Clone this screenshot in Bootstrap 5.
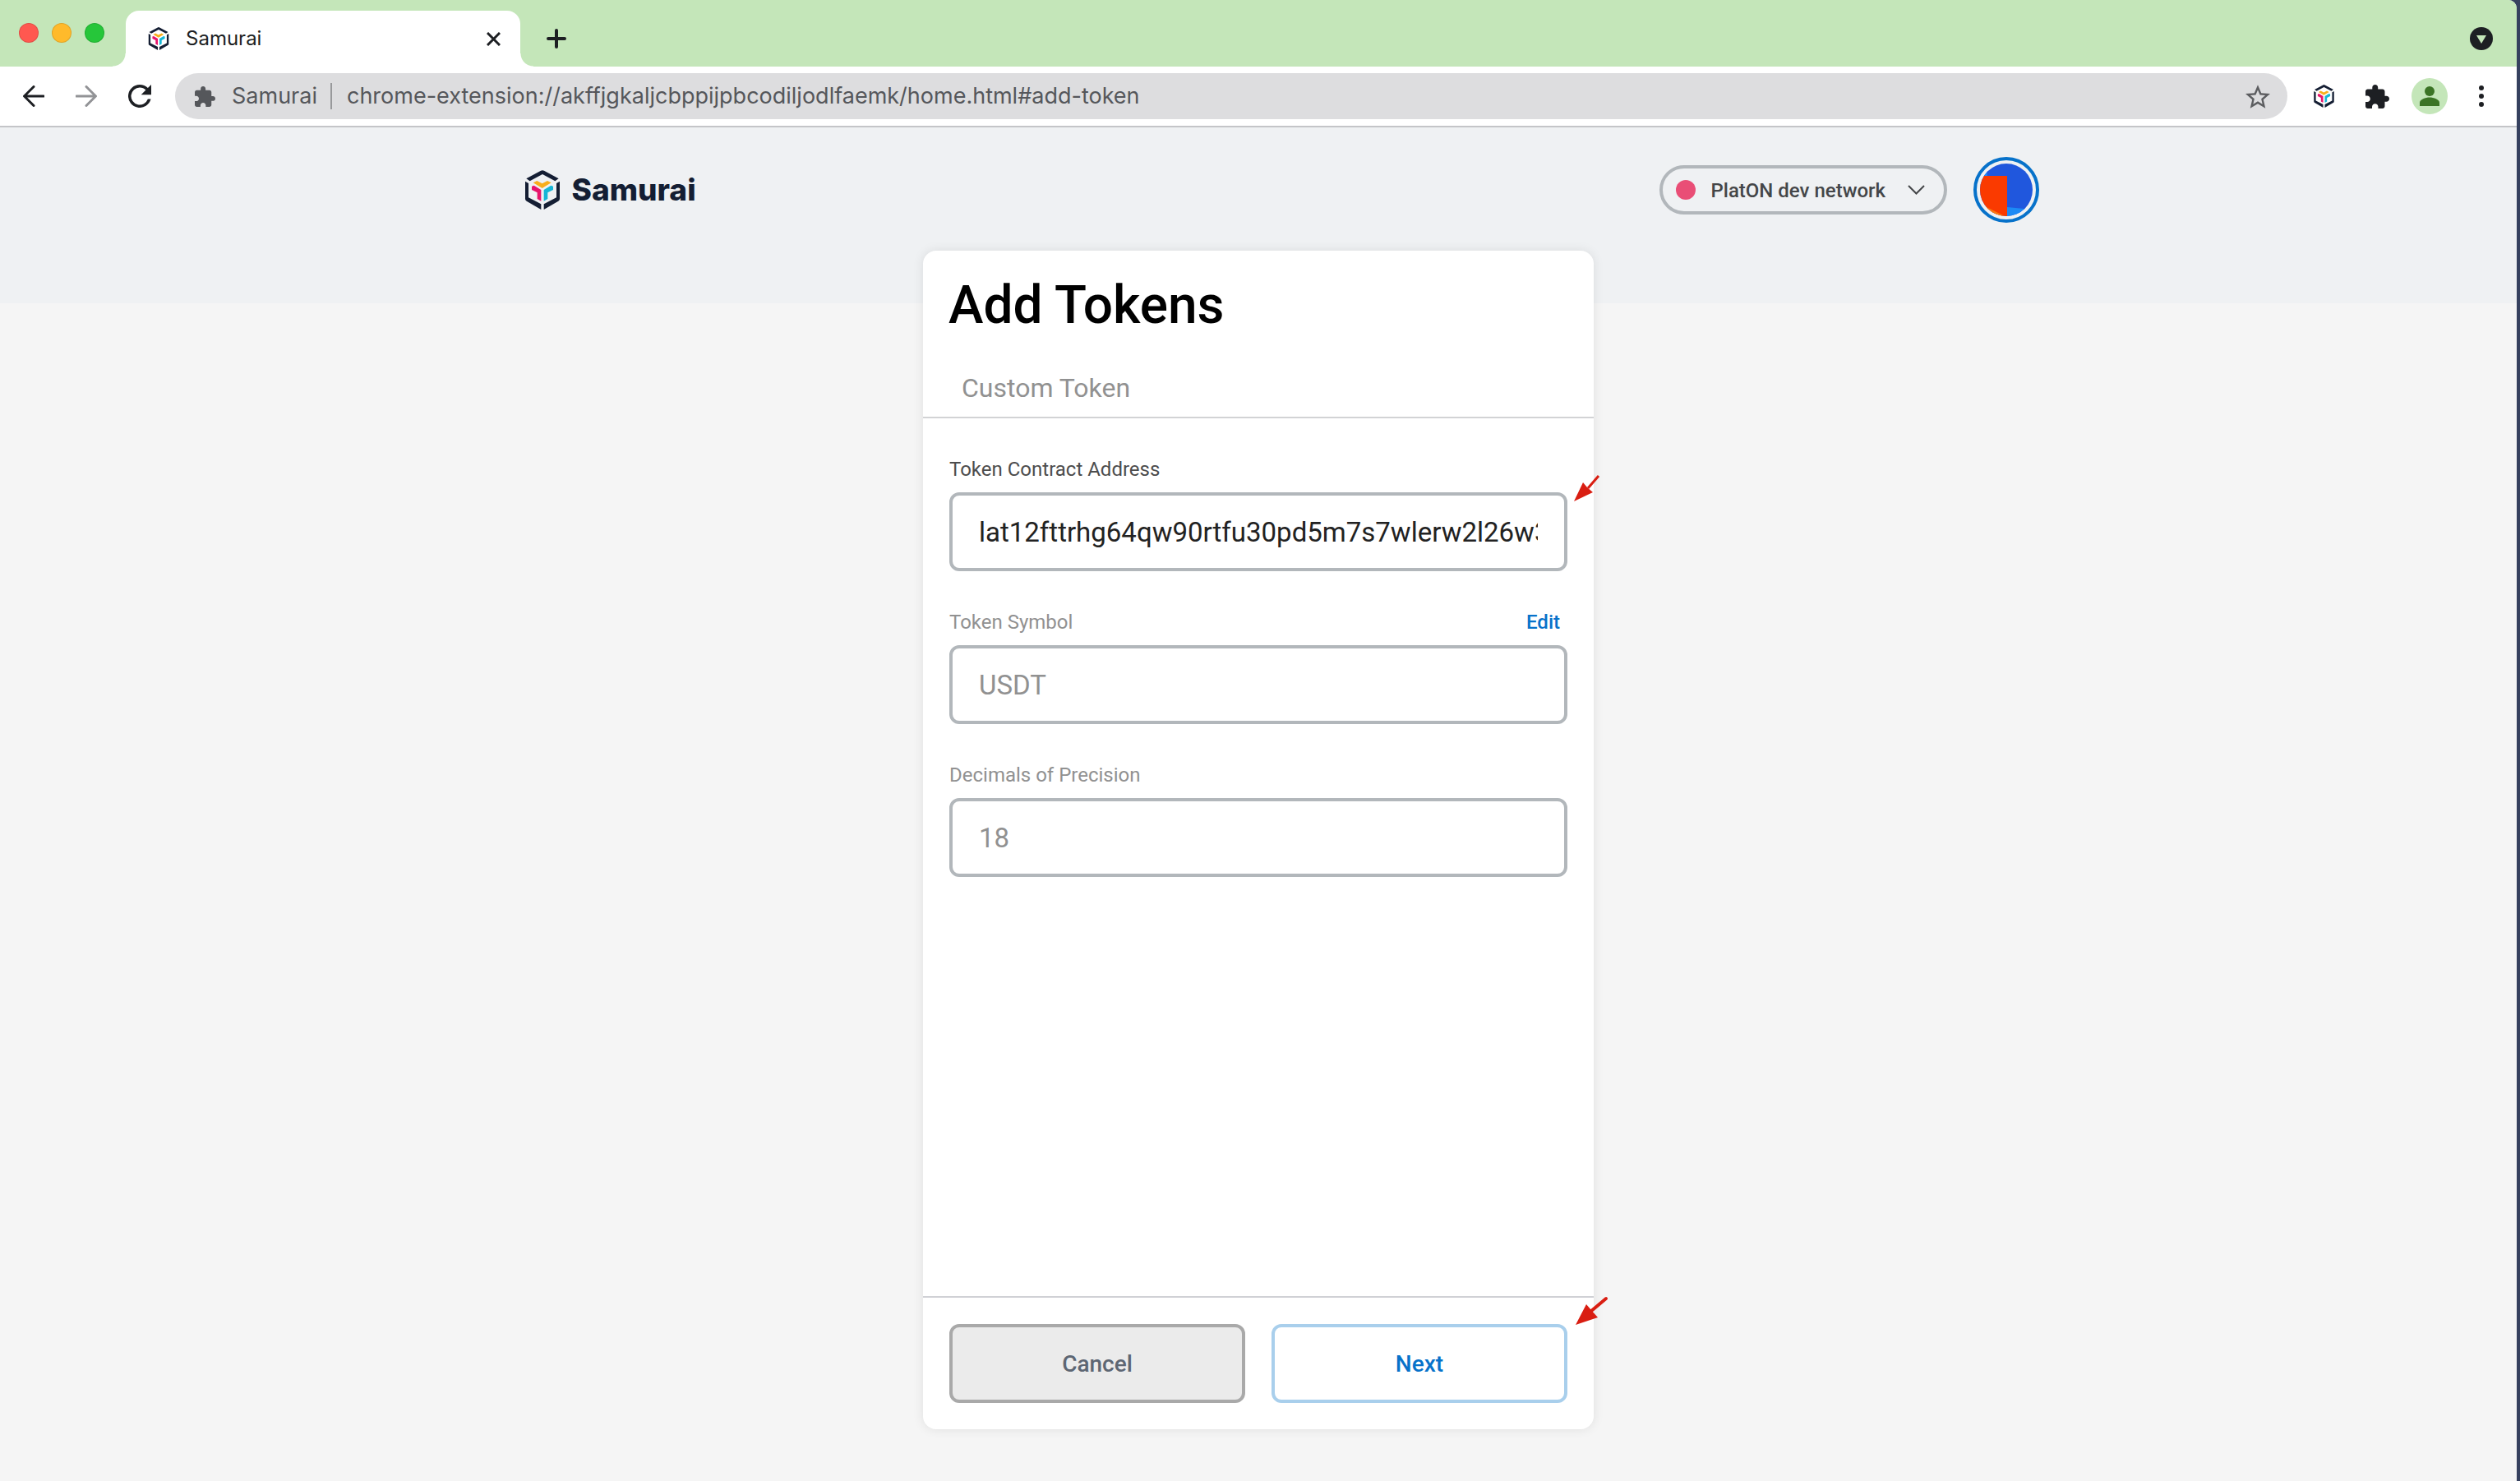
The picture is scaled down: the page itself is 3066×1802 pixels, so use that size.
<!DOCTYPE html>
<html lang="en">
<head>
<meta charset="utf-8">
<meta name="viewport" content="width=device-width, initial-scale=1">
<title>Samurai</title>
<link href="https://cdn.jsdelivr.net/npm/bootstrap@5.3.0/dist/css/bootstrap.min.css" rel="stylesheet">
<style>
  body { background: #36415f; font-family: Roboto, "Liberation Sans", sans-serif; font-size: 24px; line-height: 32px; }
  svg { display: block; flex: none; }
  button svg, a svg { pointer-events: none; }
  .window { min-height: 100vh; margin-right: 4px; background: #f5f5f5; border-top-right-radius: 10px; overflow: hidden; }
  .plain { border: 0; background: none; padding: 0; color: #1d1f23; }

  /* browser chrome */
  .chrome-text { font-family: Inter, "Liberation Sans", sans-serif; }
  .tab-strip { height: 81px; background: #c4e6b9; padding: 13px 29px 0 23px; }
  .lights { gap: 16px; height: 54px; }
  .light { width: 24px; height: 24px; border-radius: 50%; border: 1px solid rgba(0,0,0,.12); }
  .light-r { background: #ff5850; } .light-y { background: #ffba2b; } .light-g { background: #26c63a; }
  .page-tab { position: relative; width: 480px; height: 68px; margin-left: 26px; padding: 0 24px 0 27px; background: #fff; border-radius: 16px 16px 0 0; font-size: 24px; color: #1d1f23; }
  .page-tab::before, .page-tab::after { content: ""; position: absolute; bottom: 0; width: 16px; height: 16px; }
  .page-tab::before { right: 100%; background: radial-gradient(circle at 0 0, transparent 15px, #fff 16px); }
  .page-tab::after { left: 100%; background: radial-gradient(circle at 100% 0, transparent 15px, #fff 16px); }
  .toolbar { height: 74px; background: #fff; border-bottom: 2px solid #c4c5c8; padding: 0 40px 0 28px; }
  .nav-icons { gap: 38px; margin-right: 29px; }
  .address { height: 56px; border-radius: 28px; background: #dddddf; padding: 0 21px 0 24px; font-size: 27px; color: #55575b; }
  .address-rule { width: 2px; height: 32px; background: #98999b; margin: 0 18px 0 16px; }
  .url-field { border: 0; background: none; padding: 0; color: inherit; outline: 0; min-width: 0; }
  .actions { gap: 38px; margin-left: 32px; }
  .profile { width: 44px; height: 44px; margin-left: -11px; border-radius: 50%; background: #c4e6b9; }

  /* extension page */
  .app { background: linear-gradient(#eff1f3 214px, #f5f5f5 214px); }
  .app-bar { width: 62vw; margin-right: auto; margin-left: auto; padding: 36px 0 34px 58px; }
  .brand { gap: 15px; font-family: Inter, sans-serif; font-weight: 800; font-size: 37px; line-height: 48px; color: #141e33; text-decoration: none; }
  .network { width: 350px; height: 60px; border: 4px solid #b2b7bb; border-radius: 30px; background: none; padding: 0 23px 0 16px; font-weight: 500; font-size: 24px; color: #444648; }
  .network-name { padding-top: 2px; }
  .network-dot { width: 24px; height: 24px; border-radius: 50%; background: #e94e76; margin-right: 18px; }
  .account { width: 80px; height: 80px; margin-left: 32px; padding: 4px; border: 4px solid #0772ca; border-radius: 50%; background: none; }
  .token-card { width: 816px; margin-bottom: 63px; border: 0; border-radius: 16px; box-shadow: 0 0 14px rgba(0,0,0,.09); }
  .token-head { border-bottom: 2px solid #d2d3d5; padding: 31px 31px 0; }
  .token-title { font-size: 64px; line-height: 72px; font-weight: 500; color: #000; margin: 0; }
  .token-tab { display: block; padding: 41px 16px 12px; font-size: 32px; line-height: 46px; color: #919191; text-decoration: none; }
  .token-form { padding: 46px 32px 0; }
  .field { margin-bottom: 46px; }
  .field-name { font-size: 24px; line-height: 32px; margin-bottom: 12px; color: #4d4d4d; }
  .field-name.muted { color: #919191; }
  .edit { font-size: 24px; font-weight: 500; line-height: 32px; color: #0772ca; text-decoration: none; margin-right: 9px; }
  .entry, .entry:disabled { height: 96px; padding: 0 32px; border: 4px solid #b2b7bb; border-radius: 12px; background: #fff; font-size: 33px; color: #222; }
  .entry:disabled { color: #919191; opacity: 1; }
  .token-foot { border-top: 2px solid #d0d1d5; padding: 32px; gap: 32px; }
  .act { height: 96px; flex: 1; border: 4px solid; border-radius: 12px; padding-top: 2px; font-size: 28px; font-weight: 500; }
  .act-cancel { background: #ebebeb; border-color: #a9a9a9; color: #5d6673; }
  .act-next { background: #fff; border-color: #a9cfec; color: #0772ca; }
  .pointer { position: absolute; }
  .pointer-field { left: 792px; top: 272px; }
  .pointer-next { left: 794px; bottom: 126px; }
</style>
<script src="https://cdn.jsdelivr.net/npm/bootstrap@5.3.0/dist/js/bootstrap.bundle.min.js"></script>
</head>
<body>
<svg width="0" height="0" class="position-absolute" aria-hidden="true">
  <symbol id="logo" viewBox="0 0 126 144">
    <path fill="#141e33" d="M4 31 57 2Q63-1 69 2L122 31 109 40 63 15 17 40ZM0 41 12 48V100L58 124V144L5 113Q0 110 0 105ZM126 41 114 48V100L68 124V144L121 113Q126 110 126 105Z"/>
    <path fill="#f9ae1c" d="M29 46 43 39 62 49 81 39 95 46 62 66Z"/>
    <path fill="#e8156c" d="M24 59 32 56 58 72V113L44 105V82L24 72Z"/>
    <path fill="#17b6d6" d="M102 59 94 56 68 72V113L82 105V82L102 72Z"/>
  </symbol>
  <symbol id="puzzle" viewBox="2 1 21 21"><path fill="currentColor" d="M20.500 11H19V7c0-1.100-.9-2-2-2h-4V3.500C13 2.120 11.880 1 10.500 1S8 2.120 8 3.500V5H4c-1.100 0-1.990.9-1.990 2v3.800H3.500c1.490 0 2.700 1.210 2.700 2.700s-1.210 2.700-2.700 2.700H2V20c0 1.100.9 2 2 2h3.800v-1.500c0-1.490 1.210-2.700 2.700-2.700s2.700 1.210 2.700 2.700V22H17c1.100 0 2-.9 2-2v-4h1.500c1.380 0 2.500-1.120 2.500-2.500S21.880 11 20.500 11z"/></symbol>
</svg>

<div class="window d-flex flex-column">
  <header class="chrome-text">
    <div class="tab-strip d-flex">
      <div class="lights d-flex align-items-center" aria-hidden="true">
        <span class="light light-r"></span><span class="light light-y"></span><span class="light light-g"></span>
      </div>
      <div class="page-tab d-flex align-items-center">
        <svg width="26" height="28"><use href="#logo"/></svg>
        <span class="ms-3 ps-1 flex-grow-1">Samurai</span>
        <button class="plain" aria-label="Close tab"><svg width="17" height="17" viewBox="0 0 17 17" stroke="#1d1f23" stroke-width="3"><path d="M1 1 16 16M16 1 1 16"/></svg></button>
      </div>
      <button class="plain ms-4 ps-2 pb-0 align-self-center" aria-label="New tab"><svg width="24" height="24" viewBox="0 0 24 24" stroke="#1d1f23" stroke-width="4" stroke-linecap="round"><path d="M12 2V22M2 12H22"/></svg></button>
      <button class="plain ms-auto align-self-center" aria-label="Search tabs"><svg width="28" height="28" viewBox="0 0 28 28"><circle cx="14" cy="14" r="14" fill="#1d1f23"/><path fill="#c4e6b9" d="M8 10H20L14 20Z"/></svg></button>
    </div>
    <div class="toolbar d-flex align-items-center">
      <div class="nav-icons d-flex align-items-center">
        <button class="plain" aria-label="Back"><svg width="26" height="26" viewBox="0 0 26 26" fill="none" stroke="#1d1f23" stroke-width="3" stroke-linecap="round"><path d="M25 13H2M13 1.500 1.500 13 13 24.500"/></svg></button>
        <button class="plain" aria-label="Forward"><svg width="26" height="26" viewBox="0 0 26 26" fill="none" stroke="#929396" stroke-width="3" stroke-linecap="round"><path d="M1 13H24M13 1.500 24.500 13 13 24.500"/></svg></button>
        <button class="plain" aria-label="Reload"><svg width="28" height="28" viewBox="4 4 16 16"><path fill="#1d1f23" d="M17.650 6.350A7.960 7.960 0 0 0 12 4a8 8 0 1 0 7.730 10h-2.080A6 6 0 1 1 12 6c1.660 0 3.140.69 4.220 1.780L13 11h7V4z"/></svg></button>
      </div>
      <div class="address d-flex align-items-center flex-grow-1">
        <svg width="25" height="25"><use href="#puzzle"/></svg>
        <span class="ms-3 ps-1">Samurai</span>
        <span class="address-rule"></span>
        <input class="url-field flex-grow-1" type="text" aria-label="Address" value="chrome-extension://akffjgkaljcbppijpbcodiljodlfaemk/home.html#add-token">
        <button class="plain" aria-label="Bookmark"><svg width="30" height="29" viewBox="2 2 20 19"><path fill="#5c5d60" d="M22 9.240l-7.190-.62L12 2 9.190 8.630 2 9.240l5.460 4.730L5.820 21 12 17.270 18.180 21l-1.630-7.030zM12 15.400l-3.760 2.270 1-4.280-3.320-2.880 4.380-.38L12 6.100l1.710 4.040 4.380.38-3.320 2.880 1 4.280z"/></svg></button>
      </div>
      <div class="actions d-flex align-items-center">
        <button class="plain" aria-label="Samurai"><svg width="25" height="28"><use href="#logo"/></svg></button>
        <button class="plain" aria-label="Extensions"><svg width="29" height="29"><use href="#puzzle"/></svg></button>
        <button class="plain profile" aria-label="Profile"><svg width="44" height="44" viewBox="0 0 44 44" fill="#3b7425"><circle cx="22" cy="16" r="6"/><path d="M10 34V30C10 26 17 23.500 22 23.500S34 26 34 30V34Z"/></svg></button>
        <button class="plain" aria-label="Menu"><svg width="6" height="26" viewBox="0 0 6 26" fill="#1d1f23"><circle cx="3" cy="3" r="3"/><circle cx="3" cy="13" r="3"/><circle cx="3" cy="23" r="3"/></svg></button>
      </div>
    </div>
  </header>

  <div class="app d-flex flex-column flex-grow-1">
    <div class="app-bar d-flex align-items-center">
      <a class="brand d-flex align-items-center me-auto" href="#"><svg width="42" height="48"><use href="#logo"/></svg>Samurai</a>
      <button class="network d-flex align-items-center">
        <span class="network-dot"></span><span class="network-name me-auto">PlatON dev network</span>
        <svg width="21" height="12" viewBox="0 0 21 12" fill="none" stroke="#444648" stroke-width="2"><path d="M1 1 10.500 10.500 20 1"/></svg>
      </button>
      <button class="account" aria-label="Account">
        <svg width="64" height="64" viewBox="0 0 64 64"><defs><clipPath id="disc"><circle cx="32" cy="32" r="32"/></clipPath></defs>
          <g clip-path="url(#disc)"><path fill="#2057dd" d="M0 0H64V64H0Z"/><path fill="#1c8af5" d="M33 53 64 56V64H33Z"/><path fill="#1c8af5" d="M8 8 5 16H9Z"/><path fill="#fa3a00" d="M0 15H33V64H0Z"/><path fill="#fb7a12" d="M0 49 30 64H0Z"/></g></svg>
      </button>
    </div>

    <main class="token-card card flex-grow-1 align-self-center">
      <div class="token-head">
        <h1 class="token-title">Add Tokens</h1>
        <a class="token-tab" href="#add-token">Custom Token</a>
      </div>
      <form class="token-form flex-grow-1">
        <div class="field">
          <label class="field-name d-block" for="address">Token Contract Address</label>
          <input class="entry form-control" id="address" type="text" value="lat12fttrhg64qw90rtfu30pd5m7s7wlerw2l26w3">
        </div>
        <div class="field">
          <div class="d-flex justify-content-between">
            <label class="field-name muted" for="symbol">Token Symbol</label>
            <a class="edit" href="#symbol">Edit</a>
          </div>
          <input class="entry form-control" id="symbol" type="text" value="USDT" disabled>
        </div>
        <div class="field">
          <label class="field-name muted d-block" for="decimals">Decimals of Precision</label>
          <input class="entry form-control" id="decimals" type="text" value="18" disabled>
        </div>
      </form>
      <div class="token-foot d-flex">
        <button class="act act-cancel" type="button">Cancel</button>
        <button class="act act-next" type="button">Next</button>
      </div>
      <svg class="pointer pointer-field" width="32" height="34" viewBox="0 0 32 34" aria-hidden="true"><path d="M17 17 30 2" stroke="#d91e12" stroke-width="3"/><path fill="#d91e12" d="M0 33 11 10 16 16 23 22Z"/></svg>
      <svg class="pointer pointer-next" width="40" height="36" viewBox="0 0 40 36" aria-hidden="true"><path d="M18 19 37 3" stroke="#d91e12" stroke-width="4" stroke-linecap="round"/><path fill="#d91e12" d="M0 35 13 10 19 17 27 26Z"/></svg>
    </main>
  </div>
</div>
</body>
</html>
